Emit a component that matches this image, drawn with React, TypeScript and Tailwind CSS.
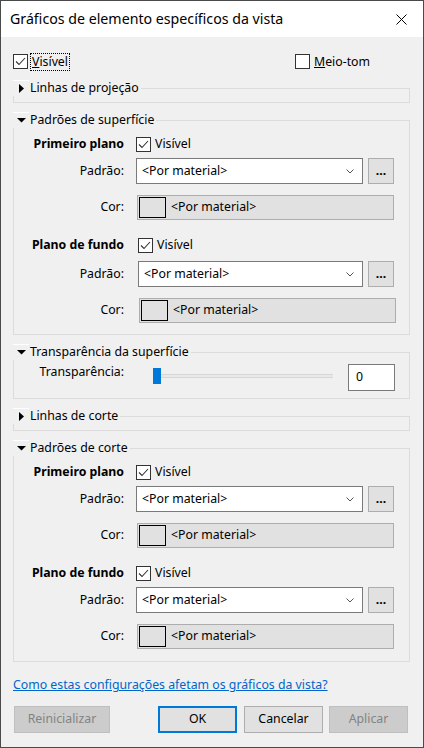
import type { ReactNode } from 'react'

// Revit-style "view specific element graphics" dialog, Win10 look.

function CheckBox({ checked = false }: { checked?: boolean }) {
  return (
    <span className="flex h-[15px] w-[15px] shrink-0 items-center justify-center border border-[#333333] bg-white">
      {checked && (
        <svg width="11" height="11" viewBox="0 0 11 11" fill="none">
          <path d="M1 5.5 L4 8.5 L10 2" stroke="#333333" strokeWidth="1.1" />
        </svg>
      )}
    </span>
  )
}

function Group({ title, open = true, children }: { title: string; open?: boolean; children?: ReactNode }) {
  return (
    <div className="flex flex-col">
      <div className="flex h-4">
        <div className="flex w-4 items-center justify-center border-t border-white">
          {open ? (
            <svg width="9" height="5" viewBox="0 0 9 5">
              <polygon points="0,0 9,0 4.5,4.5" fill="#000" />
            </svg>
          ) : (
            <svg width="5" height="9" viewBox="0 0 5 9">
              <polygon points="0,0 5,4.5 0,9" fill="#000" />
            </svg>
          )}
        </div>
        <span className="pl-[1px] pr-[2px] leading-4">{title}</span>
        <div className="mt-2 flex-1 border-t border-r border-[#dcdcdc]" />
      </div>
      {open ? (
        <div className="border-x border-b border-[#dcdcdc]">{children}</div>
      ) : (
        <div className="h-[7px] border-x border-b border-[#dcdcdc]" />
      )}
    </div>
  )
}

function PatternBlock({ title, second = false, shifted = false }: { title: string; second?: boolean; shifted?: boolean }) {
  return (
    <div className={second ? 'mt-[17px] flex flex-col' : 'mt-[8px] flex flex-col'}>
      <div className="flex h-4 items-center">
        <span className="w-[110px] text-right font-bold leading-4">{title}</span>
        <div className={shifted ? 'ml-[14px] flex items-center gap-[4px]' : 'ml-[12px] flex items-center gap-[4px]'}>
          <CheckBox checked />
          <span className="leading-4">Visível</span>
        </div>
      </div>
      <div className={shifted ? 'mt-[8px] flex h-[26px]' : 'mt-[6px] flex h-[26px]'}>
        <span className="flex w-[110px] items-center justify-end">Padrão:</span>
        <div
          className={
            shifted
              ? 'ml-[14px] flex w-[225px] items-center justify-between border border-[#7a7a7a] bg-white pl-[5px] pr-[8px]'
              : 'ml-[12px] flex w-[227px] items-center justify-between border border-[#7a7a7a] bg-white pl-[5px] pr-[8px]'
          }
        >
          <span>&lt;Por material&gt;</span>
          <svg width="8" height="5" viewBox="0 0 8 5" fill="none">
            <path d="M0.5 0.5 L4 4 L7.5 0.5" stroke="#555" strokeWidth="1" />
          </svg>
        </div>
        <div className="ml-[5px] flex w-[26px] items-end justify-center border border-[#adadad] bg-[#e1e1e1] pb-[6px] font-bold leading-none">
          ...
        </div>
      </div>
      <div className="mt-[11px] flex h-[25px]">
        <span className="flex w-[110px] items-center justify-end">Cor:</span>
        <div
          className={
            shifted
              ? 'ml-[15px] flex w-[257px] items-center gap-[5px] border border-[#adadad] bg-[#e1e1e1] p-[1px]'
              : 'ml-[13px] flex w-[257px] items-center gap-[5px] border border-[#adadad] bg-[#e1e1e1] p-[1px]'
          }
        >
          <span className="h-[21px] w-[27px] border border-black bg-[#e1e1e1]" />
          <span>&lt;Por material&gt;</span>
        </div>
      </div>
    </div>
  )
}

export default function App() {
  return (
    <div className="flex h-[748px] w-[424px] flex-col border border-[#4a4a4a] bg-[#f0f0f0] text-[12.3px] text-black [font-family:'Noto_Sans',sans-serif]">
      <div className="flex h-[36px] shrink-0 items-center justify-between bg-white pl-[9px] pr-[16px]">
        <span className="text-[14.2px]">Gráficos de elemento específicos da vista</span>
        <svg width="11" height="11" viewBox="0 0 11 11" fill="none">
          <path d="M0.5 0.5 L10.5 10.5 M10.5 0.5 L0.5 10.5" stroke="#000" strokeWidth="1" />
        </svg>
      </div>

      <div className="flex flex-col pl-[12px] pr-[13px] pt-[17px]">
        <div className="flex h-[15px] items-center">
          <div className="flex w-[282px] items-center">
            <CheckBox checked />
            <span className="ml-[2px] border border-dotted border-black px-[1px] leading-4">
              <span className="underline">V</span>isível
            </span>
          </div>
          <div className="flex items-center gap-[4px]">
            <CheckBox />
            <span className="leading-4">
              <span className="underline">M</span>eio-tom
            </span>
          </div>
        </div>

        <div className="mt-[11px]">
          <Group title="Linhas de projeção" open={false} />
        </div>

        <div className="mt-[9px]">
          <Group title="Padrões de superfície">
            <div className="pb-[11px]">
              <PatternBlock title="Primeiro plano" />
              <PatternBlock title="Plano de fundo" second shifted />
            </div>
          </Group>
        </div>

        <div className="mt-[9px]">
          <Group title="Transparência da superfície">
            <div className="flex pt-[4px] pb-[7px]">
              <span className="w-[110px] text-right leading-4">Transparência:</span>
              <div className="ml-[29px] mt-[4px] flex h-[16px] w-[180px] items-center">
                <span className="h-[16px] w-[8px] bg-[#0078d7]" />
                <span className="h-[4px] flex-1 border-y border-[#d6d6d6] bg-[#e7eaea]" />
              </div>
              <div className="ml-[15px] flex h-[27px] w-[47px] items-center border border-[#7a7a7a] bg-white pl-[7px]">
                0
              </div>
            </div>
          </Group>
        </div>

        <div className="mt-[9px]">
          <Group title="Linhas de corte" open={false} />
        </div>

        <div className="mt-[9px]">
          <Group title="Padrões de corte">
            <div className="pb-[12px]">
              <PatternBlock title="Primeiro plano" />
              <PatternBlock title="Plano de fundo" second />
            </div>
          </Group>
        </div>

        <a className="mt-[15px] self-start leading-4 text-[#0066cc] underline">
          Como estas configurações afetam os gráficos da vista?
        </a>

        <div className="mt-[13px] flex h-[27px] pl-[1px]">
          <div className="flex w-[96px] items-center justify-center border border-[#bfbfbf] bg-[#cccccc] text-[#838383]">
            Reinicializar
          </div>
          <div className="ml-[48px] flex w-[79px] items-center justify-center border-2 border-[#0078d7] bg-[#e1e1e1]">
            OK
          </div>
          <div className="ml-[7px] flex w-[79px] items-center justify-center border border-[#adadad] bg-[#e1e1e1]">
            Cancelar
          </div>
          <div className="ml-[6px] flex w-[79px] items-center justify-center border border-[#bfbfbf] bg-[#cccccc] text-[#838383]">
            Aplicar
          </div>
        </div>
      </div>
    </div>
  )
}
